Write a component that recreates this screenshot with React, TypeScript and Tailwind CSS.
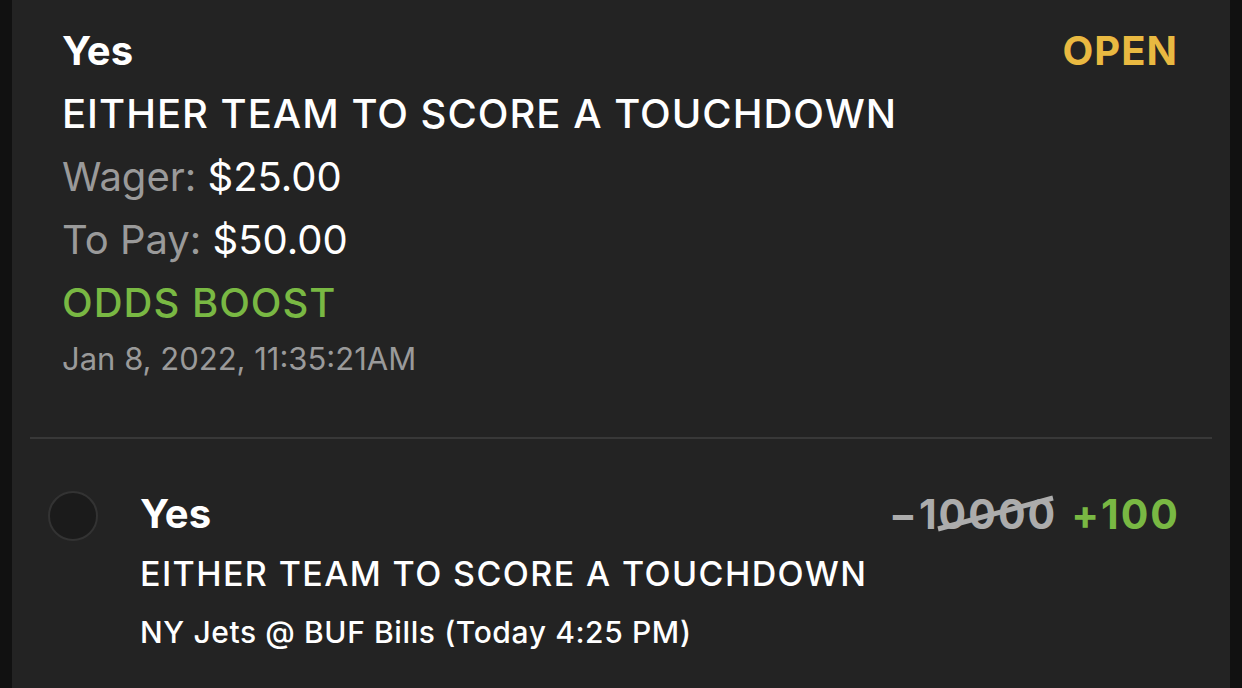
import React from 'react';

const font = { fontFamily: 'Inter, "Noto Sans", sans-serif' };

export default function App() {
    return (
        <div
            className="flex h-[688px] w-[1242px] overflow-hidden bg-[#111111] px-[12px] text-white"
            style={font}
        >
            <div className="flex flex-1 flex-col bg-[#232323]">
                <div className="flex flex-col pl-[50px] pr-[52px] pt-[26px]">
                    <div className="flex items-start justify-between">
                        <span className="text-[40px] font-bold leading-[50px]">Yes</span>
                        <span className="text-[40px] font-bold leading-[50px] tracking-[1px] text-[#e9b941]">
                            OPEN
                        </span>
                    </div>
                    <div className="mt-[12px] text-[40px] font-medium leading-[52px] tracking-[1px]">
                        EITHER TEAM TO SCORE A TOUCHDOWN
                    </div>
                    <div className="mt-[11px] text-[40px] leading-[52px]">
                        <span className="text-[#9a9a9a]">Wager: </span>$25.00
                    </div>
                    <div className="mt-[11px] text-[40px] leading-[52px]">
                        <span className="text-[#9a9a9a]">To Pay: </span>$50.00
                    </div>
                    <div className="mt-[11px] text-[40px] font-medium leading-[52px] tracking-[1px] text-[#79b843]">
                        ODDS BOOST
                    </div>
                    <div className="mt-[8px] text-[31px] leading-[44px] text-[#9a9a9a]">
                        Jan 8, 2022, 11:35:21AM
                    </div>
                </div>
                <div className="mx-[18px] mt-[56px] h-[2px] bg-[#383838]" />
                <div className="flex items-start pl-[36px] pr-[50px] pt-[50px]">
                    <div className="mt-[2px] h-[50px] w-[50px] shrink-0 rounded-full border-2 border-[#333333] bg-[#1b1b1b]" />
                    <div className="ml-[42px] flex flex-1 flex-col">
                        <div className="flex items-start justify-between">
                            <span className="text-[40px] font-bold leading-[50px]">Yes</span>
                            <div className="flex items-center gap-[14px] text-[41px] font-bold leading-[50px] tracking-[2px]">
                                <span className="relative text-[#acacac]">
                                    −10000
                                    <svg
                                        className="absolute left-0 top-0"
                                        width="170"
                                        height="50"
                                        viewBox="0 0 170 50"
                                    >
                                        <line
                                            x1="49"
                                            y1="40"
                                            x2="164"
                                            y2="9"
                                            stroke="#acacac"
                                            strokeWidth="5"
                                        />
                                    </svg>
                                </span>
                                <span className="text-[#79b843]">+100</span>
                            </div>
                        </div>
                        <div className="mt-[13px] text-[34px] font-medium leading-[44px] tracking-[1.4px]">
                            EITHER TEAM TO SCORE A TOUCHDOWN
                        </div>
                        <div className="mt-[16px] text-[30px] font-medium leading-[40px] tracking-[0.6px]">
                            NY Jets @ BUF Bills (Today 4:25 PM)
                        </div>
                    </div>
                </div>
            </div>
        </div>
    );
}
